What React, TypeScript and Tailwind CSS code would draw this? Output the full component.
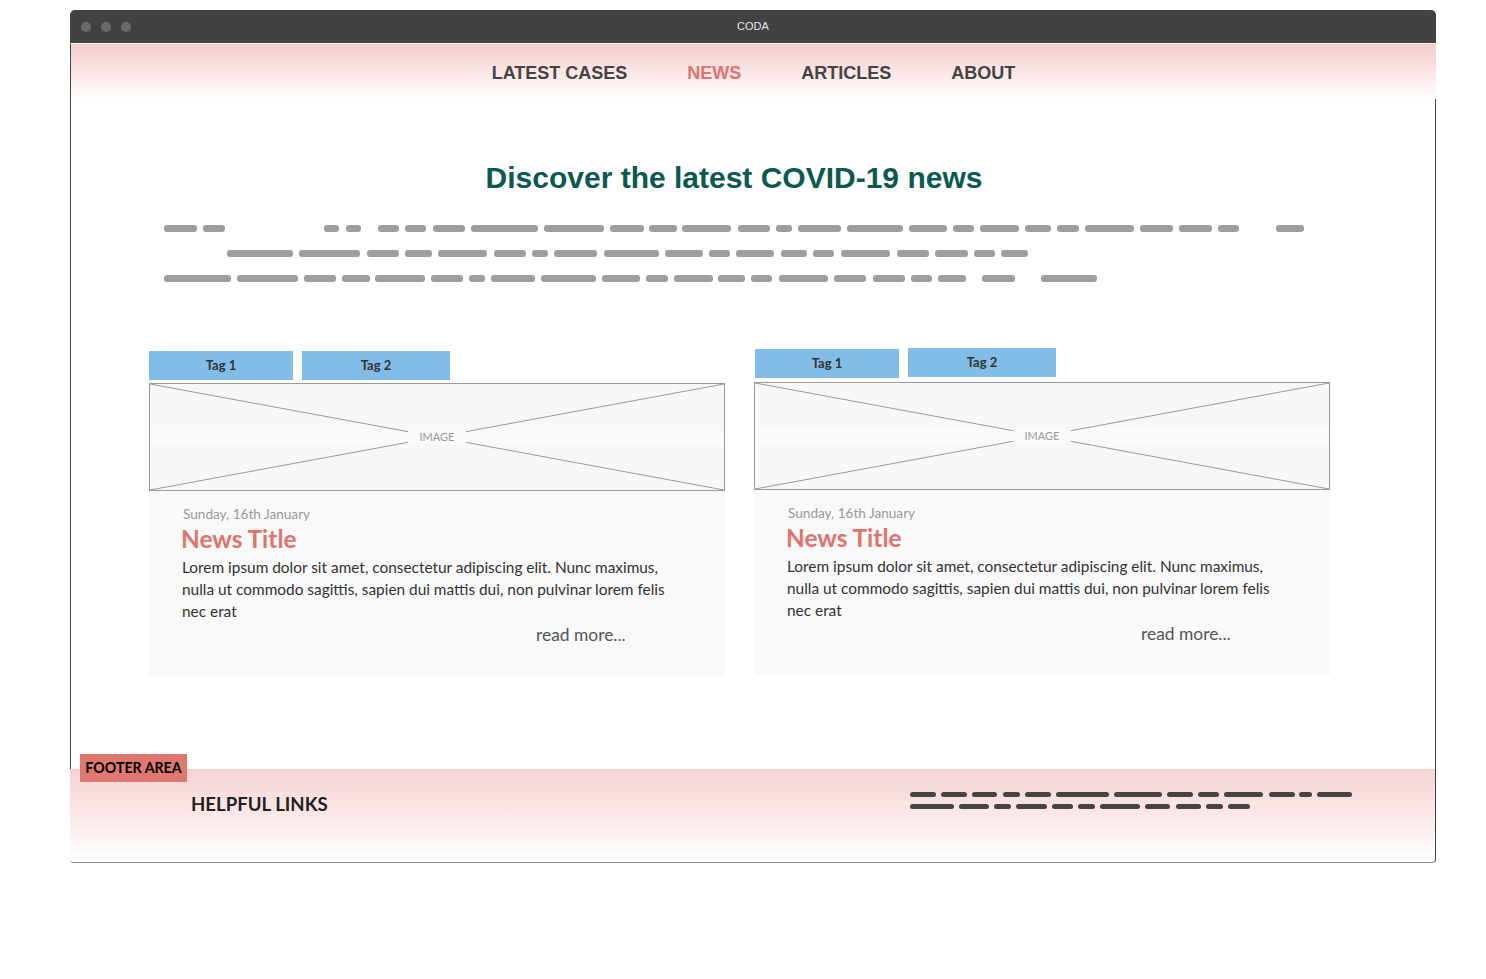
import React from 'react'

type Span = [number, number]

// placeholder text rows (absolute x of each dash)
const textRows: Span[][] = [
    [[164, 197], [203, 225], [324, 339], [346, 361], [378, 399], [405, 426], [433, 465], [471, 538], [544, 604], [610, 644], [649, 677], [682, 731], [738, 770], [776, 792], [798, 841], [847, 903], [909, 947], [953, 974], [980, 1019], [1025, 1051], [1057, 1079], [1085, 1134], [1140, 1173], [1179, 1212], [1218, 1239], [1276, 1304]],
    [[227, 293], [299, 360], [367, 399], [405, 432], [438, 487], [494, 526], [532, 548], [554, 597], [604, 659], [665, 703], [709, 730], [736, 774], [781, 807], [813, 834], [841, 890], [897, 929], [935, 968], [974, 995], [1001, 1028]],
    [[164, 231], [237, 298], [304, 336], [342, 370], [375, 425], [431, 463], [469, 485], [491, 535], [541, 596], [602, 640], [646, 668], [674, 713], [718, 745], [751, 772], [779, 828], [834, 866], [873, 905], [911, 932], [938, 966], [982, 1015], [1041, 1097]],
]

const footerRows: Span[][] = [
    [[910, 936], [941, 967], [972, 997], [1003, 1020], [1025, 1051], [1056, 1109], [1114, 1162], [1167, 1193], [1198, 1219], [1224, 1263], [1269, 1295], [1299, 1312], [1317, 1352]],
    [[910, 954], [959, 989], [994, 1011], [1016, 1047], [1052, 1073], [1078, 1095], [1100, 1140], [1145, 1170], [1176, 1201], [1206, 1223], [1228, 1250]],
]

const DashRow = ({ spans, origin, className }: { spans: Span[]; origin: number; className: string }) => {
    let prev = origin
    return (
        <div className="flex">
            {spans.map(([a, b], i) => {
                const ml = a - prev
                prev = b
                return <span key={i} className={'shrink-0 ' + className} style={{ marginLeft: ml, width: b - a }} />
            })}
        </div>
    )
}

const ImageBox = () => (
    <div className="relative h-[108px] w-[576px] border border-[#999] bg-[#f8f8f8]">
        <div className="absolute left-0 right-0 top-[46px] h-[14px] bg-[#fafafa]" />
        <svg className="absolute inset-0 h-full w-full" viewBox="0 0 574 106" preserveAspectRatio="none">
            <line x1="0" y1="0" x2="574" y2="106" stroke="#9a9a9a" strokeWidth="1" vectorEffect="non-scaling-stroke" />
            <line x1="574" y1="0" x2="0" y2="106" stroke="#9a9a9a" strokeWidth="1" vectorEffect="non-scaling-stroke" />
        </svg>
        <div className="absolute inset-0 flex items-center justify-center">
            <span className="bg-[#fafafa] px-[12px] text-[11px] leading-[14px] text-[#999]">IMAGE</span>
        </div>
    </div>
)

const NewsCard = ({ top, tagTops, tagLeft, imgGap }: { top: number; tagTops: number[]; tagLeft: number; imgGap: number }) => (
    <div className="flex flex-col" style={{ paddingTop: top }}>
        <div className="flex items-start gap-[9px]" style={{ paddingLeft: tagLeft }}>
            <div className="flex h-[29px] w-[144px] items-center justify-center bg-[#82bde8] pt-[1px] text-[13px] font-bold text-[#333]" style={{ marginTop: tagTops[0] }}>
                Tag 1
            </div>
            <div className="flex h-[29px] w-[148px] items-center justify-center bg-[#82bde8] pt-[1px] text-[13px] font-bold text-[#333]" style={{ marginTop: tagTops[1] }}>
                Tag 2
            </div>
        </div>
        <div style={{ marginTop: imgGap }}>
            <ImageBox />
        </div>
        <div className="h-[185px] w-[576px] bg-[#f9f9f9] pl-[34px] pt-[14px]">
            <p className="text-[13.6px] leading-[18px] text-[#9a9a9a]">Sunday, 16th January</p>
            <h3 className="-ml-[2px] mt-[1px] text-[24.4px] font-bold leading-[30px] text-[#e0736c]">News Title</h3>
            <p className="-ml-[1px] mt-[2px] text-[15.4px] leading-[22px] text-[#333]">
                Lorem ipsum dolor sit amet, consectetur adipiscing elit. Nunc maximus,
                <br />
                nulla ut commodo sagittis, sapien dui mattis dui, non pulvinar lorem felis
                <br />
                nec erat
            </p>
            <p className="ml-[353px] mt-[2px] text-[17.4px] leading-[22px] text-[#555]">read more...</p>
        </div>
    </div>
)

export default function App() {
    const nav = ['LATEST CASES', 'NEWS', 'ARTICLES', 'ABOUT']
    return (
        <div className="min-h-[979px] bg-white font-['Lato',sans-serif]">
            <div className="ml-[70px] w-[1366px] pt-[10px]">
                {/* window title bar */}
                <div className="grid h-[33px] grid-cols-[1fr_auto_1fr] items-center rounded-t-[5px] bg-[#424242] px-[11px]">
                    <div className="flex gap-[10px]">
                        <span className="h-[10px] w-[10px] rounded-full bg-[#6a6a6a]" />
                        <span className="h-[10px] w-[10px] rounded-full bg-[#6a6a6a]" />
                        <span className="h-[10px] w-[10px] rounded-full bg-[#6a6a6a]" />
                    </div>
                    <span className="font-['Liberation_Sans',Arial,sans-serif] text-[11px] text-[#e6e6e6]">CODA</span>
                    <div />
                </div>

                {/* nav */}
                <nav className="flex h-[56px] items-center justify-center gap-[60px] border-l border-t border-l-[#444] border-t-white bg-linear-to-b from-[#f5cccc] to-white pt-[3px] font-['Liberation_Sans',Arial,sans-serif] text-[18px] font-bold">
                    {nav.map((n) => (
                        <span key={n} className={n === 'NEWS' ? 'text-[#e2726d]' : 'text-[#444]'}>
                            {n}
                        </span>
                    ))}
                </nav>

                {/* main */}
                <main className="h-[670px] border-x border-[#444]">
                    <h1 className="pr-[38px] pt-[62px] text-center font-['Liberation_Sans',Arial,sans-serif] text-[30px] font-bold leading-[34px] text-[#0b5a4f]">
                        Discover the latest COVID-19 news
                    </h1>
                    <div className="ml-[93px] mt-[30px] flex flex-col gap-[18px]">
                        {textRows.map((r, i) => (
                            <DashRow key={i} spans={r} origin={164} className="h-[7px] rounded-[3px] bg-[#9e9e9e]" />
                        ))}
                    </div>
                    <div className="ml-[78px] mt-[66px] flex items-start gap-[29px]">
                        <NewsCard top={3} tagTops={[0, 0]} tagLeft={0} imgGap={3} />
                        <NewsCard top={0} tagTops={[1, 0]} tagLeft={1} imgGap={4} />
                    </div>
                </main>

                {/* footer */}
                <footer className="relative flex h-[94px] rounded-b-[4px] border-b border-r border-b-[#8a8a8a] border-r-[#444] bg-linear-to-b from-[#f5d2d2] to-white pt-[23px]">
                    <div className="absolute -top-[15px] left-[10px] flex h-[28px] w-[107px] items-center justify-center bg-[#e07872] text-[14.2px] font-bold text-black">
                        FOOTER AREA
                    </div>
                    <div className="w-[840px] pl-[121px] text-[18.6px] font-bold leading-[24px] text-[#222]">HELPFUL LINKS</div>
                    <div className="flex flex-col gap-[7px]">
                        {footerRows.map((r, i) => (
                            <DashRow key={i} spans={r} origin={910} className="h-[5px] rounded-[3px] bg-[#444]" />
                        ))}
                    </div>
                </footer>
            </div>
        </div>
    )
}
